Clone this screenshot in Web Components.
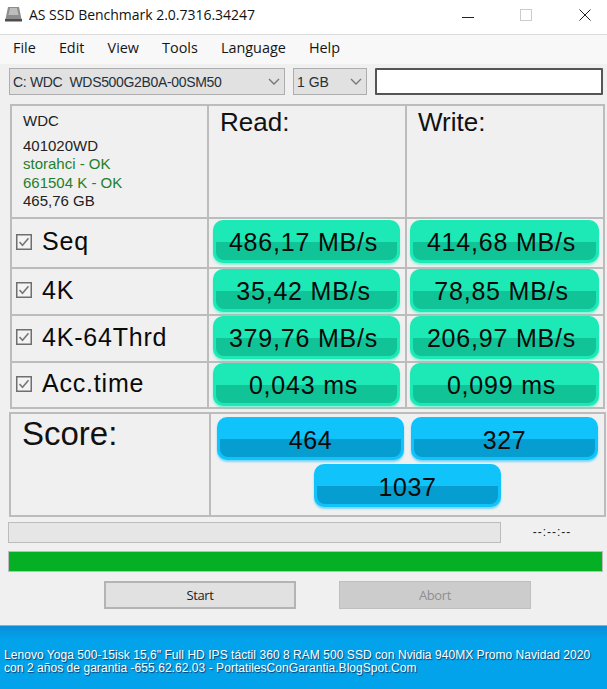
<!DOCTYPE html>
<html>
<head>
<meta charset="utf-8">
<title>AS SSD Benchmark</title>
<style>
  html, body { margin: 0; padding: 0; }
  body {
    width: 607px;
    height: 689px;
    overflow: hidden;
    background: #f0f0f0;
    font-family: "Liberation Sans", Arial, sans-serif;
  }
</style>
</head>
<body>
<as-titlebar>AS SSD Benchmark 2.0.7316.34247</as-titlebar>
<as-menubar></as-menubar>
<as-toolbar></as-toolbar>
<as-results></as-results>
<as-score></as-score>
<as-progress></as-progress>
<as-actions></as-actions>
<as-banner></as-banner>

<script>
// title bar with the window buttons
class AsTitlebar extends HTMLElement {
  constructor() {
    super();
    this.attachShadow({ mode: 'open' });
    this.shadowRoot.innerHTML = `
    <style>
      :host {
        display: flex;
        align-items: center;
        height: 34px;
        background: #fff;
        border-bottom: 1px solid #dcdcdc;
        font-family: "Open Sans", sans-serif;
        font-size: 14px;
        color: #111;
      }
      .icon { margin: -5px 7px 0 5px; display: block; }
      .text { flex: 1; letter-spacing: -.02px; margin-top: -6px; }
      .ctl { width: 12px; height: 12px; display: block; margin-top: -5px; }
      .min { margin-right: 46px; }
      .max { margin-right: 47px; }
      .close { margin-right: 16px; }
    </style>
    <svg class="icon" width="17" height="15" viewBox="0 0 17 15">
      <path d="M3 0h11l2.5 12h-16z" fill="#8d8d8d"/>
      <path d="M5 1h7l1.5 7h-10z" fill="#bdbdbd"/>
      <rect x="0" y="12" width="17" height="2.5" fill="#4d4d4d"/>
    </svg>
    <span class="text"><slot></slot></span>
    <svg class="ctl min" viewBox="0 0 12 12"><path d="M0 8.5h12" stroke="#222" stroke-width="1"/></svg>
    <svg class="ctl max" viewBox="0 0 12 12"><rect x=".5" y=".5" width="11" height="11" fill="none" stroke="#ccc"/></svg>
    <svg class="ctl close" viewBox="0 0 12 12"><path d="M.5 .5l11 11M11.5 .5l-11 11" stroke="#222" stroke-width="1"/></svg>
    `;
  }
}

class AsMenubar extends HTMLElement {
  constructor() {
    super();
    this.attachShadow({ mode: 'open' });
    const items = ['File', 'Edit', 'View', 'Tools', 'Language', 'Help'];
    this.shadowRoot.innerHTML = `
    <style>
      :host {
        box-sizing: border-box;
        display: flex;
        align-items: center;
        height: 29px;
        padding: 0 0 4px 13px;
        gap: 23.1px;
        background: #f8f8f8;
        font-family: "Open Sans", sans-serif;
        font-size: 14.4px;
        color: #151515;
      }
    </style>
    ${items.map(i => `<span>${i}</span>`).join('')}
    `;
  }
}

// drive / size selects and the empty text box
class AsToolbar extends HTMLElement {
  constructor() {
    super();
    this.attachShadow({ mode: 'open' });
    const arrow = `<svg width="12" height="7" viewBox="0 0 12 7"><path d="M1 1l5 5 5-5" fill="none" stroke="#777" stroke-width="1.4"/></svg>`;
    this.shadowRoot.innerHTML = `
    <style>
      :host {
        display: flex;
        gap: 8px;
        height: 27px;
        padding: 4px 4px 0 9px;
        font-family: "Liberation Sans", sans-serif;
        font-size: 14px;
        color: #26303a;
      }
      .sel {
        box-sizing: border-box;
        height: 27px;
        display: flex;
        align-items: center;
        justify-content: space-between;
        padding: 0 4px 0 3px;
        background: #e1e1e1;
        border: 1px solid #adadad;
      }
      .drive { width: 276px; }
      .drive span { letter-spacing: -.33px; }
      .size { width: 74px; }
      .box {
        box-sizing: border-box;
        flex: 1;
        height: 27px;
        background: #fff;
        border: 2px solid #555;
        border-radius: 1px;
      }
    </style>
    <div class="sel drive"><span>C: WDC&nbsp; WDS500G2B0A-00SM50</span>${arrow}</div>
    <div class="sel size"><span>1 GB</span>${arrow}</div>
    <div class="box"></div>
    `;
  }
}

class AsPill extends HTMLElement {
  constructor() {
    super();
    this.attachShadow({ mode: 'open' });
    this.shadowRoot.innerHTML = `
    <style>
      :host {
        --top: #1de9b6;
        --low: #10c498;
        --glow: rgba(61, 242, 194, .55);
        position: relative;
        box-sizing: border-box;
        display: flex;
        align-items: center;
        justify-content: center;
        width: 187px;
        height: 43px;
        padding: 2px 6px 0 0;
        border-radius: 10px;
        background: var(--top);
        box-shadow: 0 2px 2px var(--glow);
        font-size: 25px;
        letter-spacing: .8px;
        color: #0a0a0a;
      }
      :host([blue]) {
        --top: #10c4fb;
        --low: #069ed0;
        --glow: rgba(44, 200, 255, .6);
        padding: 4px 0 0 0;
        letter-spacing: .65px;
      }
      /* darker lower half of the button */
      .band {
        position: absolute;
        left: 3px;
        right: 3px;
        top: 52%;
        bottom: 3px;
        border-radius: 0 0 8px 8px;
        background: var(--low);
      }
      .text { position: relative; }
    </style>
    <div class="band"></div>
    <span class="text"><slot></slot></span>
    `;
  }
}

class AsCheck extends HTMLElement {
  constructor() {
    super();
    this.attachShadow({ mode: 'open' });
    this.shadowRoot.innerHTML = `
    <style>
      :host { display: block; width: 16px; height: 16px; }
      svg { display: block; }
    </style>
    <svg width="16" height="16" viewBox="0 0 16 16">
      <rect x=".75" y=".75" width="14.5" height="14.5" fill="#f4f4f4" stroke="#6f6f6f" stroke-width="1.5"/>
      <path d="M3.5 8l3 3.2 6-7" fill="none" stroke="#777" stroke-width="1.6"/>
    </svg>
    `;
  }
}

// main table: drive info, read and write columns
class AsResults extends HTMLElement {
  constructor() {
    super();
    this.attachShadow({ mode: 'open' });
    const rows = [
      ['Seq', '486,17 MB/s', '414,68 MB/s'],
      ['4K', '35,42 MB/s', '78,85 MB/s'],
      ['4K-64Thrd', '379,76 MB/s', '206,97 MB/s'],
      ['Acc.time', '0,043 ms', '0,099 ms']
    ];
    this.shadowRoot.innerHTML = `
    <style>
      :host {
        display: grid;
        grid-template-columns: 195px 196px 196px;
        grid-template-rows: 111px 48px 45px 45px 44px;
        gap: 2px;
        width: fit-content;
        margin: 9px 0 0 10px;
        padding: 2px;
        background: #bcbcbc;
      }
      .cell { background: #f0f0f0; display: flex; align-items: center; }
      .info {
        display: block;
        padding: 6px 0 0 11px;
        font-size: 15px;
        line-height: 18.6px;
        color: #222;
      }
      .info div:first-child { margin-bottom: 6px; }
      .ok { color: #1f7f2a; }
      .head {
        align-items: flex-start;
        padding: 1px 0 0 11px;
        font-size: 26px;
        color: #111;
        line-height: 30px;
      }
      .label {
        gap: 10px;
        padding: 0 0 3px 4px;
        font-size: 25px;
        letter-spacing: .8px;
        color: #0a0a0a;
      }
      .val { padding-left: 4px; align-items: flex-start; }
      .val.w { padding-left: 3px; }
      .val.w as-pill { width: 189px; }
      .first { padding-top: 1px; }
    </style>
    <div class="cell info">
      <div>WDC</div>
      <div>401020WD</div>
      <div class="ok">storahci - OK</div>
      <div class="ok">661504 K - OK</div>
      <div>465,76 GB</div>
    </div>
    <div class="cell head">Read:</div>
    <div class="cell head">Write:</div>
    ${rows.map((r, i) => `
      <div class="cell label"><as-check></as-check><span>${r[0]}</span></div>
      <div class="cell val ${i ? '' : 'first'}"><as-pill>${r[1]}</as-pill></div>
      <div class="cell val w ${i ? '' : 'first'}"><as-pill>${r[2]}</as-pill></div>
    `).join('')}
    `;
  }
}

class AsScore extends HTMLElement {
  constructor() {
    super();
    this.attachShadow({ mode: 'open' });
    this.shadowRoot.innerHTML = `
    <style>
      :host {
        display: grid;
        grid-template-columns: 198px 393px;
        gap: 2px;
        width: fit-content;
        margin: 3px 0 0 9px;
        padding: 2px;
        height: 101px;
        background: #bcbcbc;
      }
      .cell { background: #f0f0f0; }
      .title {
        padding: 0 0 0 11px;
        font-size: 33px;
        line-height: 40px;
        color: #111;
      }
      .vals {
        display: flex;
        flex-wrap: wrap;
        justify-content: center;
        align-content: flex-start;
        gap: 4px 7px;
        padding-top: 3px;
      }
    </style>
    <div class="cell title">Score:</div>
    <div class="cell vals">
      <as-pill blue>464</as-pill>
      <as-pill blue>327</as-pill>
      <as-pill blue>1037</as-pill>
    </div>
    `;
  }
}

class AsProgress extends HTMLElement {
  constructor() {
    super();
    this.attachShadow({ mode: 'open' });
    this.shadowRoot.innerHTML = `
    <style>
      :host {
        display: block;
        padding: 5px 4px 0 8px;
      }
      .top { display: flex; align-items: center; height: 21px; }
      .track {
        box-sizing: border-box;
        width: 493px;
        height: 21px;
        background: #e6e6e6;
        border: 1px solid #bcbcbc;
      }
      .time {
        flex: 1;
        padding-bottom: 2px;
        text-align: center;
        font-size: 12px;
        letter-spacing: 1px;
        color: #222;
      }
      .bar {
        box-sizing: border-box;
        height: 21px;
        margin-top: 8px;
        background: #06b025;
        border: 1px solid #bcbcbc;
      }
    </style>
    <div class="top">
      <div class="track"></div>
      <div class="time">--:--:--</div>
    </div>
    <div class="bar"></div>
    `;
  }
}

class AsActions extends HTMLElement {
  constructor() {
    super();
    this.attachShadow({ mode: 'open' });
    this.shadowRoot.innerHTML = `
    <style>
      :host {
        display: flex;
        gap: 43px;
        padding: 9px 0 16px 104px;
        font-family: "Open Sans", sans-serif;
        font-size: 13px;
        letter-spacing: -.35px;
      }
      .btn {
        box-sizing: border-box;
        width: 192px;
        height: 28px;
        display: flex;
        align-items: center;
        justify-content: center;
        background: #e1e1e1;
        border: 2px solid #b4b4b4;
        color: #222;
      }
      .btn.off {
        background: #cccccc;
        border: 1px solid #bfbfbf;
        color: #8f8f8f;
      }
    </style>
    <div class="btn">Start</div>
    <div class="btn off">Abort</div>
    `;
  }
}

class AsBanner extends HTMLElement {
  constructor() {
    super();
    this.attachShadow({ mode: 'open' });
    this.shadowRoot.innerHTML = `
    <style>
      :host {
        box-sizing: border-box;
        display: block;
        height: 64px;
        padding: 23px 0 0 4px;
        border-top: 1px solid #a8a8a8;
        background: linear-gradient(#0a8ed8 0, #03a3ec 14px, #03a3ec 100%);
        color: #fff;
        font-size: 12px;
        line-height: 13px;
        letter-spacing: .05px;
        white-space: nowrap;
        text-shadow: 1px 1px 1px #123a66;
      }
    </style>
    <div>Lenovo Yoga 500-15isk 15,6" Full HD IPS táctil 360 8 RAM 500 SSD con Nvidia 940MX Promo Navidad 2020</div>
    <div>con 2 años de garantia -655.62.62.03 - PortatilesConGarantia.BlogSpot.Com</div>
    `;
  }
}

customElements.define('as-titlebar', AsTitlebar);
customElements.define('as-menubar', AsMenubar);
customElements.define('as-toolbar', AsToolbar);
customElements.define('as-pill', AsPill);
customElements.define('as-check', AsCheck);
customElements.define('as-results', AsResults);
customElements.define('as-score', AsScore);
customElements.define('as-progress', AsProgress);
customElements.define('as-actions', AsActions);
customElements.define('as-banner', AsBanner);
</script>
</body>
</html>
